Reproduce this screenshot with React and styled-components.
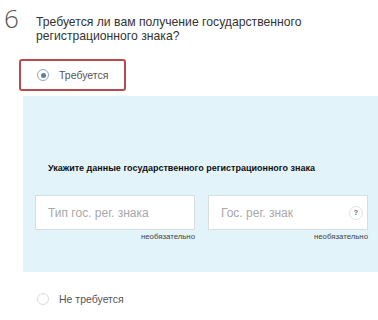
import React from "react";
import styled, { createGlobalStyle } from "styled-components";

const GlobalStyle = createGlobalStyle`
  body {
    margin: 0;
    background: #fff;
    font-family: "Liberation Sans", Arial, sans-serif;
  }
`;

const Page = styled.div`
  width: 378px;
  height: 320px;
  overflow: hidden;
  background: #fff;
`;

const Header = styled.div`
  display: flex;
  align-items: flex-start;
  padding-left: 4px;
`;

const StepNumber = styled.div`
  width: 32px;
  font-family: "Open Sans", "Liberation Sans", sans-serif;
  font-weight: 300;
  font-size: 26px;
  line-height: 36px;
  color: #555;
`;

const Question = styled.div`
  margin-top: 15px;
  font-size: 12.2px;
  line-height: 14px;
  color: #333;
`;

const Options = styled.div`
  margin-top: 16px;
`;

const Option = styled.label`
  display: flex;
  align-items: center;
  gap: 10px;
  box-sizing: border-box;
  height: 32px;
  width: ${(p) => (p.$selected ? "107px" : "auto")};
  margin-left: 19px;
  padding-left: 16px;
  border: 2px solid ${(p) => (p.$selected ? "#b84a4d" : "transparent")};
  border-radius: 3px;
  font-size: 10.5px;
  color: #555;
`;

const Radio = styled.span`
  box-sizing: border-box;
  width: 12px;
  height: 12px;
  border-radius: 50%;
  border: 1px solid ${(p) => (p.$checked ? "#8fa9bd" : "#dcdcdc")};
  background: #fff;
  display: flex;
  align-items: center;
  justify-content: center;

  &::after {
    content: "";
    display: ${(p) => (p.$checked ? "block" : "none")};
    width: 5px;
    height: 5px;
    border-radius: 50%;
    background: #5f7f99;
  }
`;

const Panel = styled.div`
  margin: 5px 0 0 23px;
  height: 176px;
  box-sizing: border-box;
  padding: 67px 10px 0 12px;
  background: #e3f3fa;
`;

const PanelTitle = styled.div`
  margin-left: 13px;
  font-size: 9px;
  font-weight: bold;
  color: #111;
`;

const Fields = styled.div`
  display: flex;
  gap: 13px;
  margin-top: 22px;
`;

const Field = styled.div`
  width: 160px;
  display: flex;
  flex-direction: column;
`;

const InputBox = styled.div`
  box-sizing: border-box;
  height: 35px;
  border: 1px solid #d8dde0;
  background: #fff;
  display: flex;
  align-items: center;
  padding: 0 12px;
  font-size: 12px;
  color: #a8a8a8;
`;

const Help = styled.span`
  margin-left: auto;
  margin-right: -8px;
  width: 14px;
  height: 14px;
  border-radius: 50%;
  border: 1px solid #e2e2e2;
  box-sizing: border-box;
  font-size: 7px;
  font-weight: bold;
  color: #666;
  display: flex;
  align-items: center;
  justify-content: center;
`;

const Hint = styled.div`
  margin-top: 2px;
  text-align: right;
  font-size: 7.8px;
  color: #444;
`;

const SecondOption = styled(Option)`
  margin-top: 11px;
`;

export default function App() {
  return (
    <Page>
      <GlobalStyle />
      <Header>
        <StepNumber>6</StepNumber>
        <Question>
          Требуется ли вам получение государственного
          <br />
          регистрационного знака?
        </Question>
      </Header>
      <Options>
        <Option $selected>
          <Radio $checked />
          Требуется
        </Option>
        <Panel>
          <PanelTitle>Укажите данные государственного регистрационного знака</PanelTitle>
          <Fields>
            <Field>
              <InputBox>Тип гос. рег. знака</InputBox>
              <Hint>необязательно</Hint>
            </Field>
            <Field>
              <InputBox>
                Гос. рег. знак
                <Help>?</Help>
              </InputBox>
              <Hint>необязательно</Hint>
            </Field>
          </Fields>
        </Panel>
        <SecondOption>
          <Radio />
          Не требуется
        </SecondOption>
      </Options>
    </Page>
  );
}
